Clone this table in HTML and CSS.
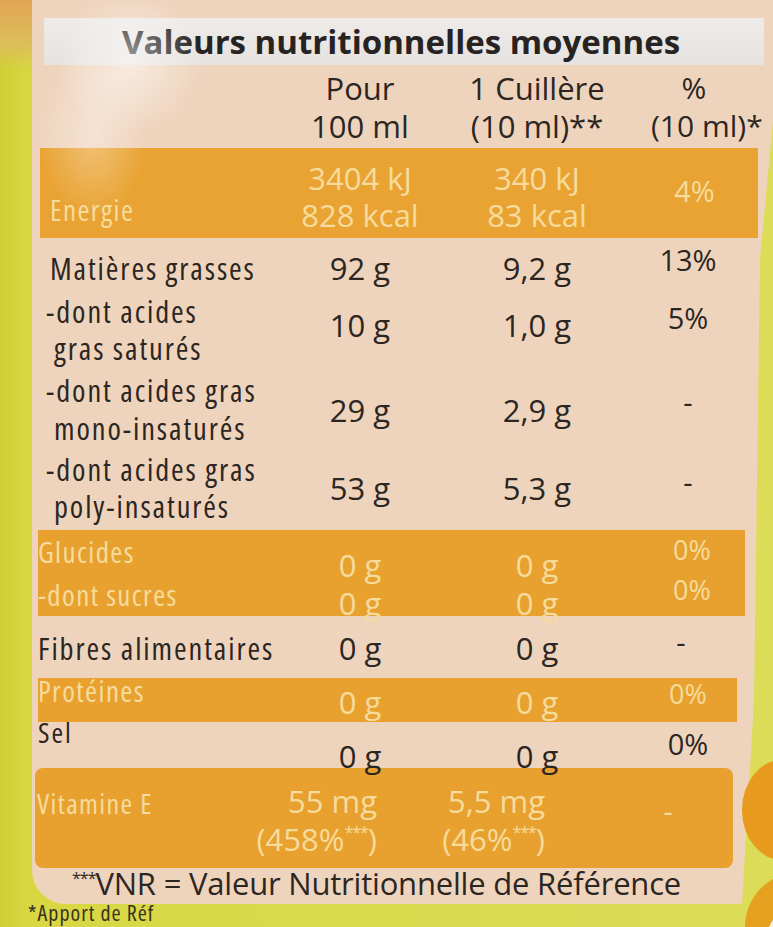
FILE: index.html
```html
<!DOCTYPE html>
<html lang="fr">
<head>
<meta charset="utf-8">
<title>Valeurs nutritionnelles moyennes</title>
<link rel="stylesheet" href="styles.css">
</head>
<body>
<div class="page">
  <div class="panel">
    <div class="title">Valeurs nutritionnelles moyennes</div>

    <div class="row head">
      <div class="c lab"></div>
      <div class="c v">Pour<br>100 ml</div>
      <div class="c v">1 Cuillère<br>(10 ml)**</div>
      <div class="c v pct">%<br>(10 ml)*</div>
    </div>

    <div class="row band energie">
      <div class="c lab">Energie</div>
      <div class="c v">3404 kJ<br>828 kcal</div>
      <div class="c v">340 kJ<br>83 kcal</div>
      <div class="c v pct">4%</div>
    </div>

    <div class="row mg">
      <div class="c lab">Matières grasses</div>
      <div class="c v">92 g</div>
      <div class="c v">9,2 g</div>
      <div class="c v pct">13%</div>
    </div>

    <div class="row sub sat">
      <div class="c lab">-dont acides<br><span class="ind">gras saturés</span></div>
      <div class="c v">10 g</div>
      <div class="c v">1,0 g</div>
      <div class="c v pct">5%</div>
    </div>

    <div class="row sub mono">
      <div class="c lab">-dont acides gras<br><span class="ind">mono-insaturés</span></div>
      <div class="c v">29 g</div>
      <div class="c v">2,9 g</div>
      <div class="c v pct">-</div>
    </div>

    <div class="row sub poly">
      <div class="c lab">-dont acides gras<br><span class="ind">poly-insaturés</span></div>
      <div class="c v">53 g</div>
      <div class="c v">5,3 g</div>
      <div class="c v pct">-</div>
    </div>

    <div class="row band gluc">
      <div class="c lab">Glucides<br>-dont sucres</div>
      <div class="c v">0 g<br>0 g</div>
      <div class="c v">0 g<br>0 g</div>
      <div class="c v pct">0%<br>0%</div>
    </div>

    <div class="row fibres">
      <div class="c lab">Fibres alimentaires</div>
      <div class="c v">0 g</div>
      <div class="c v">0 g</div>
      <div class="c v pct">-</div>
    </div>

    <div class="row band prot">
      <div class="c lab">Protéines</div>
      <div class="c v">0 g</div>
      <div class="c v">0 g</div>
      <div class="c v pct">0%</div>
    </div>

    <div class="row sel">
      <div class="c lab">Sel</div>
      <div class="c v">0 g</div>
      <div class="c v">0 g</div>
      <div class="c v pct">0%</div>
    </div>

    <div class="row band vit">
      <div class="c lab">Vitamine E</div>
      <div class="c v r1">55 mg<br>(458%<sup>***</sup>)</div>
      <div class="c v r2">5,5 mg<br>(46%<sup>***</sup>)</div>
      <div class="c v pct">-</div>
    </div>

    <p class="note"><sup>***</sup>VNR = Valeur Nutritionnelle de Référence</p>
  </div>
  <p class="apport">*Apport de Réf</p>
  <div class="deco d1"></div>
  <div class="deco d2"><div class="d2in"></div></div>
  <div class="glare"></div>
</div>
</body>
</html>
```

FILE: styles.css
```css
* { box-sizing: border-box; }

html, body {
  margin: 0;
  padding: 0;
}

body {
  width: 773px;
  height: 927px;
  overflow: hidden;
  background: #d5d63e;
  font-family: "Open Sans", "DejaVu Sans", sans-serif;
  color: #2c2622;
}

.page {
  position: relative;
  width: 773px;
  height: 927px;
  overflow: hidden;
  background:
    linear-gradient(180deg, #e2a455 0, #dcbf58 45px, rgba(220,214,70,0) 70px),
    linear-gradient(90deg, #cfcf34 0, #d8d742 30px, #dcdc58 100%);
}

.panel {
  margin-left: 32px;
  width: 741px;
  height: 904px;
  padding-top: 18px;
  background: #efd4bd;
  border-bottom-left-radius: 34px;
  clip-path: polygon(0 0, 741px 0, 741px 120px, 728px 260px, 722px 700px, 710px 100%, 0 100%);
}

.title {
  margin: 0 0 0 12px;
  width: 720px;
  height: 47px;
  background: linear-gradient(180deg, #eeebe8, #e6e2df);
  font-weight: 700;
  font-size: 33px;
  line-height: 47px;
  padding-left: 78px;
  color: #262322;
}

.row {
  display: grid;
  grid-template-columns: 253px 150px 204px 98px;
}

.c { white-space: nowrap; }
.lab {
  padding-left: 18px;
  font-size: 30.5px;
  font-stretch: 75%;
  letter-spacing: 1.9px;
}
.v {
  text-align: center;
  font-size: 31px;
}
.pct { font-size: 29px; }

.band {
  background: #e8a12f;
  color: #f6dc9c;
}

/* header */
.head { height: 80px; line-height: 38px; }
.head .v { padding-top: 4px; }
.head .pct { padding-left: 12px; font-size: 30px; }

/* Energie */
.energie {
  margin: 3px 0 0 8px;
  width: 718px;
  height: 90px;
  grid-template-columns: 245px 150px 204px 119px;
  line-height: 37px;
  background: #e9a333;
}
.energie .lab { padding-left: 10px; padding-top: 43px; font-size: 29px; letter-spacing: 1.4px; }
.energie .v { padding-top: 12px; }
.energie .pct { padding-top: 24px; padding-right: 8px; }

/* Matières grasses */
.mg { height: 54px; line-height: 36px; }
.mg .c { padding-top: 12px; }
.mg .pct { padding-top: 4px; }

.sub .lab { line-height: 37px; padding-left: 14px; }
.ind { padding-left: 8px; }

.sat { height: 78px; }
.sat .lab { padding-top: 1px; }
.sat .v { line-height: 36px; padding-top: 15px; }
.sat .pct { padding-top: 8px; }

.mono { height: 80px; }
.mono .lab { padding-top: 1px; line-height: 38px; }
.mono .v { line-height: 36px; padding-top: 22px; }
.mono .pct { padding-top: 14px; }

.poly { height: 80px; }
.poly .lab { padding-top: 1px; }
.poly .v { line-height: 36px; padding-top: 20px; }
.poly .pct { padding-top: 14px; }

/* Glucides */
.gluc {
  margin-left: 6px;
  width: 707px;
  height: 86px;
  grid-template-columns: 247px 150px 204px 106px;
}
.gluc .lab { line-height: 43px; padding-left: 0; font-size: 29px; letter-spacing: 1.4px; }
.gluc .v { line-height: 38px; padding-top: 16px; }
.gluc .pct { line-height: 40px; padding-top: 0; font-size: 27px; }

/* Fibres */
.fibres { height: 62px; line-height: 36px; }
.fibres .c { padding-top: 14px; }
.fibres .lab { padding-left: 6px; }
.fibres .pct { padding-top: 8px; padding-right: 14px; }

/* Protéines */
.prot {
  margin-left: 6px;
  width: 699px;
  height: 44px;
  grid-template-columns: 247px 150px 204px 98px;
  line-height: 32px;
}
.prot .lab { line-height: 26px; padding-left: 0; font-size: 29px; letter-spacing: 1.4px; }
.prot .v { padding-top: 8px; }
.prot .pct { padding-top: 0; font-size: 27px; }

/* Sel */
.sel { height: 44px; line-height: 36px; }
.sel .lab { line-height: 20px; font-size: 28px; padding-left: 6px; }
.sel .v { padding-top: 16px; }
.sel .pct { padding-top: 4px; }

/* Vitamine E */
.vit {
  margin: 2px 0 0 3px;
  width: 698px;
  height: 100px;
  border-radius: 8px;
  grid-template-columns: 200px 142px 168px 188px;
  line-height: 38px;
}
.vit .lab { padding-left: 2px; padding-top: 16px; font-size: 28px; letter-spacing: 1.4px; }
.vit .v { text-align: right; padding-top: 14px; }
.vit .pct { text-align: center; padding-top: 24px; padding-left: 58px; }

sup {
  font-size: 16px;
  line-height: 0;
  vertical-align: 13px;
  letter-spacing: -1px;
}

.note {
  margin: 0 0 0 40px;
  font-size: 31px;
  line-height: 30px;
  letter-spacing: -0.2px;
}
.note sup { vertical-align: 11px; }

.apport {
  position: absolute;
  left: 28px;
  top: 899px;
  margin: 0;
  font-size: 22px;
  line-height: 26px;
  font-stretch: 75%;
  letter-spacing: 1px;
  color: #3a3220;
}

.deco {
  position: absolute;
  border-radius: 50%;
  background: #e89a1e;
}
.d1 { left: 742px; top: 760px; width: 80px; height: 100px; }
.d2 { left: 745px; top: 872px; width: 110px; height: 110px; background: #e6a020; }
.d2in {
  position: absolute;
  left: 22px;
  top: 36px;
  width: 60px;
  height: 60px;
  border-radius: 50%;
  background: #f3f1ea;
}

.glare {
  position: absolute;
  left: 30px;
  top: -10px;
  width: 180px;
  height: 240px;
  background:
    radial-gradient(ellipse 40% 30% at 55% 30%, rgba(255,255,255,0.55), rgba(255,255,255,0) 100%),
    radial-gradient(ellipse 30% 35% at 35% 60%, rgba(255,255,255,0.35), rgba(255,255,255,0) 100%);
  pointer-events: none;
}
```
